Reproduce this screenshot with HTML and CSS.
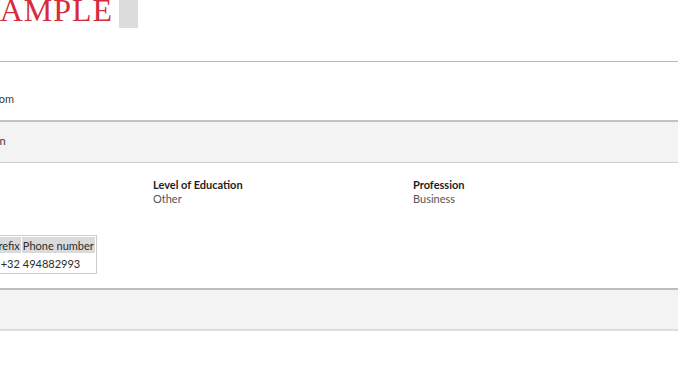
FILE: index.html
```html
<!DOCTYPE html>
<html>

<head>
    <meta charset="UTF-8">
    <meta name="viewport" content="width=device-width, initial-scale=1.0">
    <title>Profiel</title>
    <link rel="stylesheet" href="styles.css">
</head>

<body>
    <div class="page">
        <header class="top">
            <h1 class="stamp">EXAMPLE</h1>
            <div class="stamp-box"></div>
        </header>
        <section class="block contact">
            <span class="mail">info@example.com</span>
        </section>
        <section class="block shade heading">
            <span class="title">Information</span>
        </section>
        <section class="block details">
            <div class="grid">
                <div class="field">
                    <b>Nationality</b>
                    <span>Belgian</span>
                </div>
                <div class="field">
                    <b>Level of Education</b>
                    <span>Other</span>
                </div>
                <div class="field">
                    <b>Profession</b>
                    <span>Business</span>
                </div>
            </div>
            <table class="phones" border="1">
                <tr>
                    <th>Prefix</th>
                    <th>Phone number</th>
                </tr>
                <tr>
                    <td class="prefix">+32</td>
                    <td>494882993</td>
                </tr>
            </table>
        </section>
        <section class="block shade last"></section>
    </div>
</body>

</html>
```

FILE: styles.css
```css
body {
    margin: 0;
    font-family: Lato, "Liberation Sans", sans-serif;
    font-size: 11px;
    color: #2b2b2b;
    overflow: hidden;
}

.page {
    margin-left: -107px;
}

.top {
    display: flex;
    align-items: flex-start;
    height: 61px;
    border-bottom: 1px solid #b8b8b8;
    overflow: hidden;
}

.stamp {
    margin: -6px 0 0 62px;
    font-family: "Liberation Serif", serif;
    font-size: 32px;
    line-height: 32px;
    letter-spacing: 1px;
    font-weight: normal;
    color: #d62b3c;
}

.stamp-box {
    width: 19px;
    height: 28px;
    margin-left: 6px;
    background: #dcdcdc;
}

.block {
    box-sizing: border-box;
}

.contact {
    height: 60px;
    padding: 30px 0 0 30px;
    border-bottom: 2px solid #c2c2c2;
    color: #3a3a3a;
}

.shade {
    background: #f3f3f3;
}

.heading {
    height: 41px;
    padding: 12px 0 0 56px;
    border-bottom: 1px solid #cfcfcf;
    color: #3a3a3a;
}

.details {
    height: 127px;
    padding: 15px 0 0 0;
    border-bottom: 2px solid #bdbdbd;
}

.grid {
    display: grid;
    grid-template-columns: repeat(3, 260px);
}

.field {
    display: flex;
    flex-direction: column;
    line-height: 14px;
}

.field b {
    color: #1e1e1e;
}

.field span {
    color: #555;
}

.phones {
    margin: 29px 0 0 96px;
    border: 1px solid #ccc;
    border-spacing: 1px;
    color: #2b2b2b;
}

.phones th {
    background: #dadada;
    font-weight: normal;
    padding: 0 1px;
    height: 16px;
    border: none;
}

.phones td {
    padding: 1px;
    height: 16px;
    border: none;
}

.phones td.prefix {
    text-align: right;
}

.last {
    height: 41px;
    border-bottom: 2px solid #dcdcdc;
}
```
